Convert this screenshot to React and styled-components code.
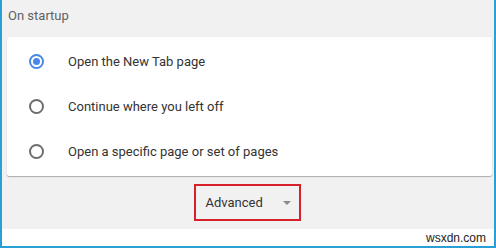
import React from "react";
import styled, { createGlobalStyle } from "styled-components";

const Global = createGlobalStyle`
  html, body { margin: 0; padding: 0; }
  body { width: 496px; height: 248px; overflow: hidden; font-family: Roboto, "Liberation Sans", Arial, sans-serif; }
`;

const Frame = styled.div`
  box-sizing: border-box;
  width: 496px;
  height: 248px;
  border-left: 2px solid #2a9fd6;
  border-right: 2px solid #2a9fd6;
  border-bottom: 2px solid #2a9fd6;
  display: flex;
  flex-direction: column;
  background: #fff;
`;

const Page = styled.div`
  background: #f1f1f1;
  height: 229px;
  padding: 0 2px 0 5px;
  display: flex;
  flex-direction: column;
`;

const Heading = styled.div`
  font-size: 13px;
  color: #616161;
  padding: 8px 0 0 1px;
  height: 37px;
  box-sizing: border-box;
`;

const Card = styled.div`
  background: #fff;
  border-radius: 2px;
  box-shadow: 0 1px 1px rgba(0,0,0,0.28), 0 0 1px rgba(0,0,0,0.12);
  height: 139px;
  box-sizing: border-box;
  padding-top: 2px;
  display: flex;
  flex-direction: column;
`;

const Row = styled.div`
  display: flex;
  align-items: center;
  height: 45px;
  padding-left: 22px;
`;

const Radio = styled.span`
  box-sizing: border-box;
  width: 15px;
  height: 15px;
  border-radius: 50%;
  border: 2px solid ${p => (p.checked ? "#4a86e8" : "#6e6e6e")};
  display: flex;
  align-items: center;
  justify-content: center;
  &::after {
    content: "";
    display: ${p => (p.checked ? "block" : "none")};
    width: 7px;
    height: 7px;
    border-radius: 50%;
    background: #4a86e8;
  }
`;

const Label = styled.span`
  margin-left: 24px;
  font-size: 13px;
  color: #333;
`;

const Footer = styled.div`
  display: flex;
  justify-content: center;
  padding-top: 8px;
  padding-right: 5px;
`;

const AdvancedBox = styled.div`
  box-sizing: border-box;
  width: 107px;
  height: 37px;
  border: 2px solid #d8202a;
  display: flex;
  align-items: center;
  padding-left: 10px;
  font-size: 13px;
  color: #333;
`;

const Arrow = styled.span`
  margin-left: 20px;
  width: 0;
  height: 0;
  border-left: 4px solid transparent;
  border-right: 4px solid transparent;
  border-top: 4px solid #8a8a8a;
`;

const Watermark = styled.div`
  flex: 1;
  display: flex;
  align-items: center;
  justify-content: flex-end;
  padding-right: 8px;
  font-family: "Liberation Sans", Arial, sans-serif;
  font-size: 12px;
  color: #222;
`;

const options = [
  { label: "Open the New Tab page", checked: true },
  { label: "Continue where you left off", checked: false },
  { label: "Open a specific page or set of pages", checked: false },
];

export default function App() {
  return (
    <>
      <Global />
      <Frame>
        <Page>
          <Heading>On startup</Heading>
          <Card>
            {options.map(o => (
              <Row key={o.label}>
                <Radio checked={o.checked} />
                <Label>{o.label}</Label>
              </Row>
            ))}
          </Card>
          <Footer>
            <AdvancedBox>
              Advanced
              <Arrow />
            </AdvancedBox>
          </Footer>
        </Page>
        <Watermark>wsxdn.com</Watermark>
      </Frame>
    </>
  );
}
